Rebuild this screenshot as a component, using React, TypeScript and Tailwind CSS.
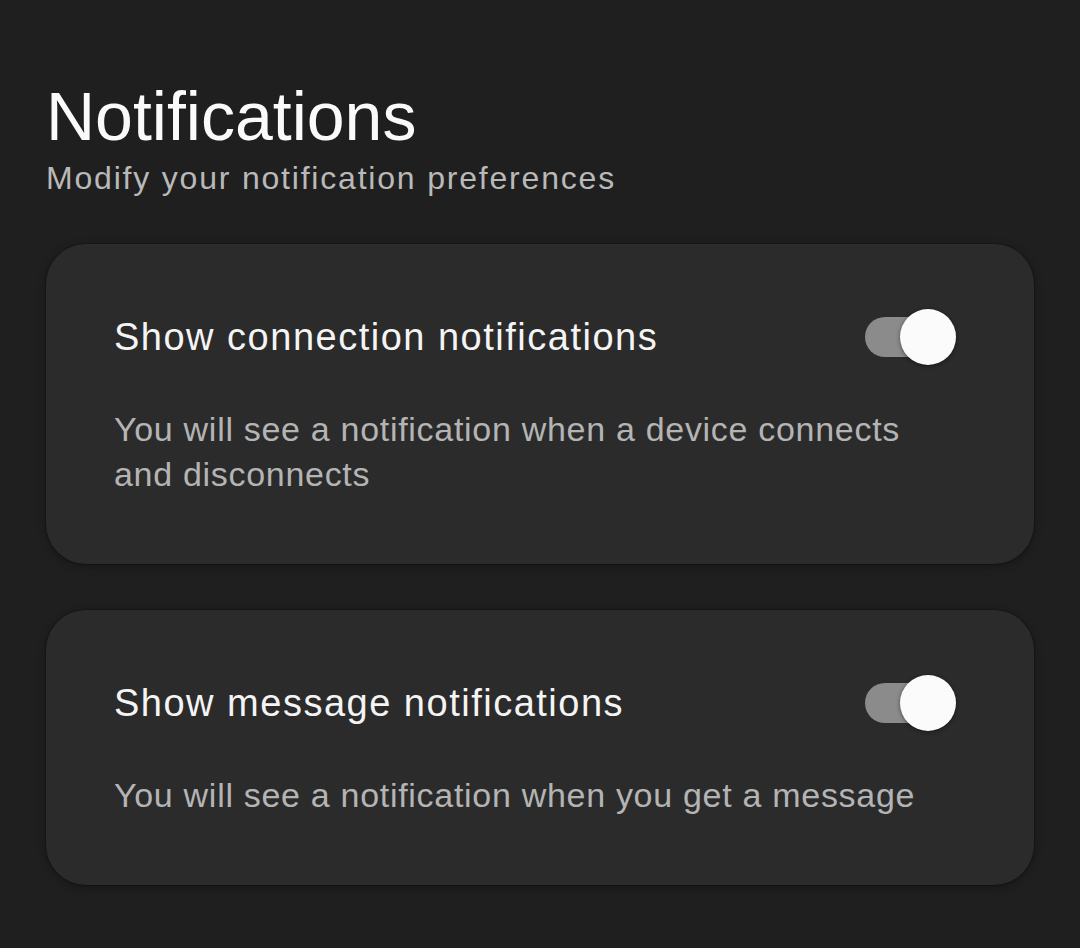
const settings = [
  {
    title: "Show connection notifications",
    text: "You will see a notification when a device connects and disconnects",
  },
  {
    title: "Show message notifications",
    text: "You will see a notification when you get a message",
  },
];

const Toggle = () => (
  <div className="relative w-[91px] h-[56px] shrink-0">
    <div className="absolute left-0 top-[8px] w-[80px] h-[40px] rounded-full bg-[#8b8b8b]" />
    <div className="absolute right-0 top-0 w-[56px] h-[56px] rounded-full bg-[#fbfbfb] shadow-[0_1px_4px_rgba(0,0,0,0.45)]" />
  </div>
);

export default function App() {
  return (
    <div
      className="min-h-screen bg-[#1f1f1f] px-[46px] pt-[82px] pb-[64px]"
      style={{ fontFamily: '"Liberation Sans", Arial, sans-serif' }}
    >
      {/* HEADER */}
      <div>
        <h1 className="text-[68px] leading-none text-[#fafafa]">Notifications</h1>
        <p className="mt-[12px] text-[32px] leading-none tracking-[1.8px] text-[#b9b9b9]">
          Modify your notification preferences
        </p>
      </div>

      {/* CARDS */}
      <div className="mt-[50px] flex flex-col gap-[46px]">
        {settings.map((item, idx) => (
          <div
            key={idx}
            className="rounded-[40px] bg-[#2b2b2b] pl-[68px] pr-[78px] pt-[65px] pb-[67px] shadow-[0_0_0_1px_rgba(0,0,0,0.18),0_2px_8px_rgba(0,0,0,0.35)]"
          >
            <div className="flex items-center justify-between">
              <h3 className="text-[38px] leading-none tracking-[1.5px] text-[#f4f4f4]">
                {item.title}
              </h3>
              <Toggle />
            </div>
            <p className="mt-[42px] text-[34px] leading-[45px] tracking-[0.7px] text-[#b4b4b4]">
              {item.text}
            </p>
          </div>
        ))}
      </div>
    </div>
  );
}
